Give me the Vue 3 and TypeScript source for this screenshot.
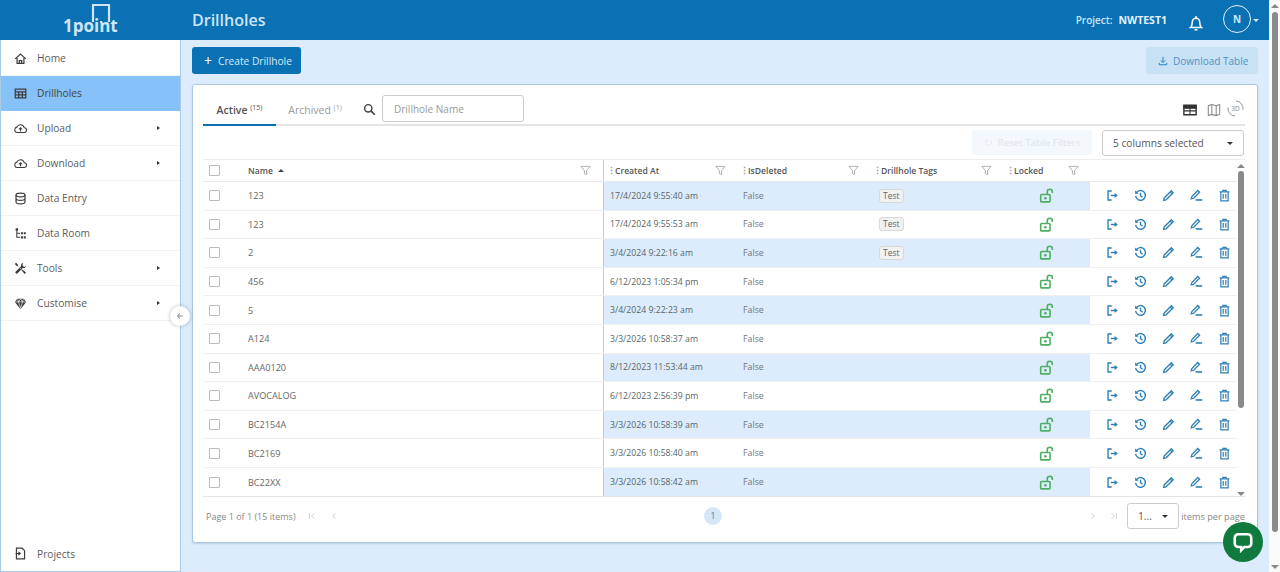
<script setup lang="ts">
interface Row { name: string; created: string; tag?: string }
const nav = [
  { label: 'Home', icon: 'i-home' },
  { label: 'Drillholes', icon: 'i-table', active: true },
  { label: 'Upload', icon: 'i-cloud-up', more: true },
  { label: 'Download', icon: 'i-cloud-up', more: true },
  { label: 'Data Entry', icon: 'i-db' },
  { label: 'Data Room', icon: 'i-tree' },
  { label: 'Tools', icon: 'i-tools', more: true },
  { label: 'Customise', icon: 'i-gem', more: true },
]
const rows: Row[] = [
  { name: '123', created: '17/4/2024 9:55:40 am', tag: 'Test' },
  { name: '123', created: '17/4/2024 9:55:53 am', tag: 'Test' },
  { name: '2', created: '3/4/2024 9:22:16 am', tag: 'Test' },
  { name: '456', created: '6/12/2023 1:05:34 pm' },
  { name: '5', created: '3/4/2024 9:22:23 am' },
  { name: 'A124', created: '3/3/2026 10:58:37 am' },
  { name: 'AAA0120', created: '8/12/2023 11:53:44 am' },
  { name: 'AVOCALOG', created: '6/12/2023 2:56:39 pm' },
  { name: 'BC2154A', created: '3/3/2026 10:58:39 am' },
  { name: 'BC2169', created: '3/3/2026 10:58:40 am' },
  { name: 'BC22XX', created: '3/3/2026 10:58:42 am' },
]
const columns = ['Created At', 'IsDeleted', 'Drillhole Tags', 'Locked']
const actions = ['i-export', 'i-history', 'i-pen', 'i-pen-line', 'i-trash']
</script>

<template>
  <div class="page">
    <svg class="defs" aria-hidden="true">
      <symbol id="i-home" viewBox="0 0 16 16"><path d="M1.500 8.500 8 2.500l6.500 6M3.800 7.500V14h8.400V7.500M6.500 14v-3.500h3V14" fill="none" stroke="currentColor" stroke-width="1.500"/></symbol>
      <symbol id="i-table" viewBox="0 0 16 16"><path d="M1.500 2.500h13v11h-13zM1.500 6h13M1.500 9.700h13M5.800 6v7.500M10.200 6v7.500" fill="none" stroke="currentColor" stroke-width="1.500"/></symbol>
      <symbol id="i-cloud-up" viewBox="0 0 16 16"><path d="M4 13h8.200a3 3 0 0 0 .4-6A4.800 4.800 0 0 0 3.600 6.300 3.400 3.400 0 0 0 4 13z" fill="none" stroke="currentColor" stroke-width="1.300"/><path d="M8 11.500V8.500" stroke="currentColor" stroke-width="1.500"/><path d="M5.300 9 8 6l2.700 3z" fill="currentColor"/></symbol>
      <symbol id="i-db" viewBox="0 0 16 16"><ellipse cx="8" cy="3.800" rx="5.500" ry="2.300" fill="none" stroke="currentColor" stroke-width="1.500"/><path d="M2.500 3.800v8.400c0 1.300 2.500 2.300 5.500 2.300s5.500-1 5.500-2.300V3.800M2.500 8c0 1.300 2.500 2.300 5.500 2.300s5.500-1 5.500-2.300" fill="none" stroke="currentColor" stroke-width="1.500"/></symbol>
      <symbol id="i-tree" viewBox="0 0 16 16"><path d="M2 1.500h3v3H2zM8.500 6.500h2.500V9H8.500zM12 6.500h2.500V9H12zM8.500 11.500h2.500V14H8.500zM12 11.500h2.500V14H12z" fill="currentColor"/><path d="M3.500 4.500V12.700H7.500M3.500 7.800H7.500" fill="none" stroke="currentColor" stroke-width="1.300"/></symbol>
      <symbol id="i-tools" viewBox="0 0 16 16"><path d="M2.500 1 5 3.500 4.500 5 14.800 13 13 14.800 5 4.500 3.500 5 1 2.500zM11.500 1.200a3 3 0 0 0-2.800 4L1.300 12.500 3.500 14.700 10.800 7.300a3 3 0 0 0 4-2.800l-2 1.500-2-1.200L10.500 3z" fill="currentColor"/></symbol>
      <symbol id="i-gem" viewBox="0 0 16 16"><path d="M4 2h8l3 4-7 9-7-9z" fill="currentColor"/><path d="M1.500 6h13M5.500 6 8 14l2.500-8M4.500 2.500 5.500 6 8 2.500 10.500 6l1-3.500" fill="none" stroke="#fff" stroke-width=".8"/></symbol>
      <symbol id="i-file" viewBox="0 0 16 16"><path d="M3 1.500h7l3 3v10H3z" fill="none" stroke="currentColor" stroke-width="1.500"/><path d="M2 8h5.500M5.500 6l2.200 2-2.200 2" fill="none" stroke="currentColor" stroke-width="1.500"/></symbol>
      <symbol id="i-filter" viewBox="0 0 12 12"><path d="M1 1.500h10L7.200 6v4.500L4.800 9.500V6z" fill="none" stroke="currentColor" stroke-width="1"/></symbol>
      <symbol id="i-unlock" viewBox="0 0 16 16"><rect x="1.800" y="7" width="10" height="7.800" rx="1" fill="none" stroke="currentColor" stroke-width="1.700"/><circle cx="6.800" cy="10.900" r="1.400" fill="currentColor"/><path d="M8.800 7V4a2.700 2.700 0 0 1 5.400 0v1.200" fill="none" stroke="currentColor" stroke-width="1.700"/></symbol>
      <symbol id="i-export" viewBox="0 0 16 16"><path d="M7 2.500H2.500v11H7" fill="none" stroke="currentColor" stroke-width="1.700"/><path d="M6 8h7.500" stroke="currentColor" stroke-width="1.800"/><path d="M10.500 4.800 14.500 8l-4 3.200z" fill="currentColor"/></symbol>
      <symbol id="i-history" viewBox="0 0 16 16"><path d="M2.600 5.200A6 6 0 1 1 2 8.500" fill="none" stroke="currentColor" stroke-width="1.700"/><path d="M1.200 1.800 1.600 6l4.200-.5z" fill="currentColor"/><path d="M8 4.500V8.300l2.500 1.700" fill="none" stroke="currentColor" stroke-width="1.700"/></symbol>
      <symbol id="i-pen" viewBox="0 0 16 16"><path d="M11.500 2.200 13.800 4.500 5 13.300 2 14l.7-3z" fill="none" stroke="currentColor" stroke-width="1.600"/><path d="M10 3.700 12.300 6" stroke="currentColor" stroke-width="1.600"/></symbol>
      <symbol id="i-pen-line" viewBox="0 0 16 16"><path d="M9.500 1.800 11.800 4.100 4.500 11.400 1.500 12.200 2.300 9.200z" fill="none" stroke="currentColor" stroke-width="1.600"/><path d="M7 13.500h8" stroke="currentColor" stroke-width="2"/></symbol>
      <symbol id="i-trash" viewBox="0 0 16 16"><path d="M3.500 3.500h9v11h-9zM2 3.500h12M6 3.500V1.700h4v1.800M6.400 6v6M9.600 6v6" fill="none" stroke="currentColor" stroke-width="1.500"/></symbol>
      <symbol id="i-first" viewBox="0 0 8 8"><path d="M1.500 1v6M6.500 1.500 3.500 4l3 2.500" fill="none" stroke="currentColor" stroke-width="1"/></symbol>
      <symbol id="i-prev" viewBox="0 0 8 8"><path d="M5.500 1.500 2.500 4l3 2.500" fill="none" stroke="currentColor" stroke-width="1"/></symbol>
      <symbol id="i-next" viewBox="0 0 8 8"><path d="M2.500 1.500 5.500 4l-3 2.500" fill="none" stroke="currentColor" stroke-width="1"/></symbol>
      <symbol id="i-last" viewBox="0 0 8 8"><path d="M6.500 1v6M1.500 1.500 4.500 4l-3 2.500" fill="none" stroke="currentColor" stroke-width="1"/></symbol>
    </svg>

    <div class="app">
      <header class="topbar">
        <div class="logo">
          <svg class="logo-mark" viewBox="0 0 20 20"><path d="M2 19V2h16v17M9 19h2" fill="none" stroke="currentColor" stroke-width="2.200"/></svg>
          <span class="logo-text">1point</span>
        </div>
        <h1 class="title">Drillholes</h1>
        <div class="top-right">
          <span class="project">Project:</span>
          <strong class="project-name">NWTEST1</strong>
          <svg class="bell" viewBox="0 0 16 16"><path d="M2.500 12.500c1.200-1 1.800-2.500 1.800-5.500a3.700 3.700 0 0 1 7.400 0c0 3 .6 4.500 1.800 5.500zM6.500 14.700h3M8 1v2" fill="none" stroke="currentColor" stroke-width="1.500"/></svg>
          <span class="avatar">N</span>
          <span class="caret-white"></span>
        </div>
      </header>

      <div class="body">
        <aside class="sidebar">
          <nav class="nav">
            <a v-for="item in nav" :key="item.label" class="nav-item" :class="{ active: item.active }">
              <svg class="nav-icon"><use :href="'#' + item.icon" /></svg>
              <span class="nav-label">{{ item.label }}</span>
              <span v-if="item.more" class="arrow"></span>
            </a>
          </nav>
          <a class="nav-item projects">
            <svg class="nav-icon"><use href="#i-file" /></svg>
            <span class="nav-label">Projects</span>
          </a>
          <button class="collapse" aria-label="collapse">
            <svg viewBox="0 0 8 8"><path d="M7 4H1.500M4 1.500 1.300 4 4 6.500" fill="none" stroke="currentColor" stroke-width="1"/></svg>
          </button>
        </aside>

        <main class="content">
          <div class="toolbar">
            <button class="btn primary"><span class="plus">+</span>Create Drillhole</button>
            <button class="btn light">
              <svg class="dl" viewBox="0 0 16 16"><path d="M8 1.500v8.500M4.500 7 8 10.500 11.500 7M2 11v3h12v-3" fill="none" stroke="currentColor" stroke-width="1.600"/></svg>
              Download Table
            </button>
          </div>

          <section class="card">
            <div class="tabs">
              <div class="tab on">Active <sup>(15)</sup></div>
              <div class="tab">Archived <sup>(1)</sup></div>
              <svg class="search" viewBox="0 0 16 16"><circle cx="6.500" cy="6.500" r="4.500" fill="none" stroke="currentColor" stroke-width="1.800"/><path d="m10 10 4.500 4.500" stroke="currentColor" stroke-width="2"/></svg>
              <div class="search-box">Drillhole Name</div>
              <div class="views">
                <svg class="view dark" viewBox="0 0 16 16"><path d="M1 2.500h14v11H1z" fill="none" stroke="currentColor" stroke-width="1.600"/><path d="M1 3h14v3H1zM1 9h14M8 6v7.500" fill="currentColor" stroke="currentColor" stroke-width="1.200"/></svg>
                <svg class="view" viewBox="0 0 16 16"><path d="M1.500 3 5.500 1.800l5 1.400 4-1.400v11.200l-4 1.400-5-1.400-4 1.200zM5.500 1.800V13M10.500 3.200v11.200" fill="none" stroke="currentColor" stroke-width="1.200"/></svg>
                <span class="view-3d">
                  <svg viewBox="0 0 17 17"><path d="M9 1a7.500 7.500 0 0 1 7 8.500M8 16A7.500 7.500 0 0 1 1 7.500" fill="none" stroke="currentColor" stroke-width=".9"/></svg>
                  3D
                </span>
              </div>
            </div>

            <div class="filters">
              <button class="reset">
                <svg class="reset-ic" viewBox="0 0 16 16"><path d="M11.500 3.500A5.500 5.500 0 1 1 4.500 3.500M4 1.500v3h3" fill="none" stroke="currentColor" stroke-width="1.300"/></svg>
                Reset Table Filters
              </button>
              <div class="select wide">5 columns selected<span class="caret"></span></div>
            </div>

            <div class="table">
              <div class="table-main">
                <div class="row head">
                  <div class="cell frozen">
                    <span class="check"></span>
                    <span class="name-head">Name</span>
                    <span class="sort"></span>
                    <svg class="filter"><use href="#i-filter" /></svg>
                  </div>
                  <div v-for="c in columns" :key="c" class="cell hcell">
                    <span class="grip">⋮</span>
                    <span class="hlabel">{{ c }}</span>
                    <svg class="filter"><use href="#i-filter" /></svg>
                  </div>
                  <div class="cell"></div>
                </div>
                <div v-for="(r, i) in rows" :key="i" class="row" :class="{ band: i % 2 === 0 }">
                  <div class="cell frozen">
                    <span class="check"></span>
                    <span class="name">{{ r.name }}</span>
                  </div>
                  <div class="cell data date">{{ r.created }}</div>
                  <div class="cell data">False</div>
                  <div class="cell data"><span v-if="r.tag" class="tag">{{ r.tag }}</span></div>
                  <div class="cell data lock"><svg class="unlock"><use href="#i-unlock" /></svg></div>
                  <div class="cell acts">
                    <svg v-for="a in actions" :key="a" class="act"><use :href="'#' + a" /></svg>
                  </div>
                </div>
              </div>
              <div class="tscroll">
                <span class="up"></span>
                <span class="tthumb"></span>
                <span class="down"></span>
              </div>
            </div>

            <div class="pager">
              <span class="pinfo total">Page 1 of 1 (15 items)</span>
              <svg class="pn first"><use href="#i-first" /></svg>
              <svg class="pn gap"><use href="#i-prev" /></svg>
              <span class="pnum">1</span>
              <svg class="pn next"><use href="#i-next" /></svg>
              <svg class="pn gap2"><use href="#i-last" /></svg>
              <div class="select small">1...<span class="caret"></span></div>
              <span class="pinfo per">items per page</span>
            </div>
          </section>
        </main>
      </div>
    </div>

    <div class="pscroll">
      <span class="up"></span>
      <span class="pthumb"></span>
      <span class="down"></span>
    </div>

    <button class="chat" aria-label="chat">
      <svg viewBox="0 0 24 24"><path d="M7 3.500h10a4 4 0 0 1 4 4v6a4 4 0 0 1-4 4h-3.500l-3.500 3.500v-3.500H7a4 4 0 0 1-4-4v-6a4 4 0 0 1 4-4z" fill="none" stroke="#fff" stroke-width="2.800"/></svg>
    </button>
  </div>
</template>

<style>
html, body { margin: 0; overflow: hidden; }
</style>

<style scoped>
* { box-sizing: border-box; }
.defs { position: absolute; width: 0; height: 0; }
.page { position: relative; display: flex; width: 1280px; height: 572px; overflow: hidden; font-family: "Open Sans", "Noto Sans", sans-serif; color: #555; background: #dcecfc; }
.app { flex: 1; min-width: 0; display: flex; flex-direction: column; }
.topbar { height: 40px; flex: none; background: #0a71b4; display: flex; align-items: center; color: #fff; }
.logo { position: relative; width: 181px; height: 40px; flex: none; color: #cfe5f6; }
.logo-mark { position: absolute; left: 91px; top: 3px; width: 20px; height: 20px; }
.logo-text { position: absolute; left: 63px; top: 15px; font-size: 17px; line-height: 22px; font-weight: 700; }
.title { margin: 0 0 0 11px; font-size: 16px; font-weight: 600; color: #cfe6f8; }
.top-right { margin-left: auto; display: flex; align-items: center; padding-right: 10px; color: #cfe6f8; font-size: 10px; }
.project { font-weight: 600; margin-right: 6px; }
.project-name { font-size: 10.500px; font-weight: 700; color: #e5f2fc; }
.bell { width: 16px; height: 16px; margin: 6px 0 0 20.500px; color: #fff; }
.avatar { width: 28px; height: 28px; margin: 0 0 2px 19.500px; border: 1.300px solid #e5f2fc; border-radius: 50%; display: flex; align-items: center; justify-content: center; font-size: 10px; font-weight: 700; }
.caret-white { margin-left: 2px; border: 3px solid transparent; border-top-color: #d8ebf9; border-bottom: 0; }

.body { flex: 1; min-height: 0; display: flex; }
.sidebar { position: relative; width: 181px; flex: none; display: flex; flex-direction: column; background: #fff; border: 1px solid #a9cbe6; border-top: 0; }
.nav { display: flex; flex-direction: column; flex: 1; padding-top: 1px; }
.nav-item { height: 35px; flex: none; display: flex; align-items: center; padding-left: 13px; border-bottom: 1px solid #eef3f8; font-size: 10.200px; color: #5c5c5c; }
.nav-item.active { background: #86c1f8; border-bottom-color: #86c1f8; color: #444; }
.nav-item.projects { border-bottom: 0; }
.nav-icon { width: 13px; height: 13px; flex: none; color: #3c3c3c; }
.nav-label { margin-left: 10px; flex: 1; }
.arrow { margin-right: 20px; border: 2.500px solid transparent; border-left: 3px solid #333; border-right: 0; }
.collapse { position: absolute; right: -10px; top: 266px; width: 20px; height: 20px; padding: 0; border: 0; border-radius: 50%; background: #fff; box-shadow: 0 0 4px rgba(0, 0, 0, .25); color: #888; display: flex; align-items: center; justify-content: center; }
.collapse svg { width: 8px; height: 8px; }

.content { flex: 1; min-width: 0; padding: 7px 11px 29px; display: flex; flex-direction: column; }
.toolbar { display: flex; justify-content: space-between; height: 27px; flex: none; margin-bottom: 10px; }
.btn { height: 27px; border: 0; border-radius: 3px; font: inherit; font-size: 10.200px; display: flex; align-items: center; }
.primary { width: 109px; background: #0a71b4; color: #d7ebf9; padding-left: 12px; }
.plus { font-size: 14px; line-height: 1; margin-right: 6px; color: #fff; }
.light { width: 112px; background: #c8e1f5; color: #4d93c5; padding-left: 12px; font-size: 10px; }
.dl { width: 10px; height: 10px; margin-right: 5px; color: #2b82bd; }

.card { flex: 1; min-height: 0; background: #fff; border: 1px solid #a9c8e0; border-radius: 3px; padding: 10px 12px 0 10px; display: flex; flex-direction: column; box-shadow: 0 1px 2px rgba(60, 100, 140, .2); }
.tabs { height: 31px; flex: none; display: flex; align-items: center; border-bottom: 2px solid #e4e4e4; position: relative; }
.tab { width: 73px; height: 31px; margin-bottom: -2px; padding-top: 8px; text-align: center; font-size: 10.500px; color: #999; border-bottom: 2px solid transparent; }
.tab + .tab { width: 70px; margin-left: 4px; }
.tab.on { color: #555; font-weight: 600; border-bottom-color: #0a71b4; }
sup { font-size: 7px; line-height: 0; font-weight: 400; }
.search { width: 13px; height: 13px; margin: 0 6px 0 13px; color: #444; flex: none; }
.search-box { width: 142px; height: 27px; margin-bottom: 2px; border: 1px solid #ccc; border-radius: 3px; padding-left: 11px; font-size: 10px; line-height: 27px; color: #999; }
.views { margin-left: auto; display: flex; align-items: center; padding-right: 1px; }
.view { width: 14px; height: 14px; color: #888; margin-right: 10px; }
.view + .view { margin-right: 6px; }
.view.dark { color: #333; }
.view-3d { position: relative; width: 17px; height: 17px; font-size: 6.500px; line-height: 17px; text-align: center; color: #888; margin-bottom: 2px; }
.view-3d svg { position: absolute; left: 0; top: 0; width: 17px; height: 17px; }

.filters { height: 33px; flex: none; display: flex; justify-content: flex-end; align-items: flex-start; gap: 10px; padding: 4px 1px 0 0; }
.reset { width: 120px; height: 25px; border: 0; border-radius: 3px; background: #f3f8fd; color: #dce3ea; font: inherit; font-size: 9.800px; display: flex; align-items: center; justify-content: center; gap: 5px; }
.reset-ic { width: 9px; height: 9px; color: #dde5ec; }
.select { position: relative; border: 1px solid #ccc; border-radius: 3px; background: #fff; font-size: 10.200px; color: #555; display: flex; align-items: center; }
.wide { width: 142px; height: 26px; padding-left: 10px; }
.small { width: 53px; height: 26px; padding-left: 10px; margin-left: 9px; }
.caret { position: absolute; right: 10px; top: 11px; border: 3.500px solid transparent; border-top-color: #333; border-bottom: 0; }

.table { flex: none; display: flex; border-top: 1px solid #ececec; border-bottom: 1px solid #e4e4e4; height: 338px; overflow: hidden; }
.table-main { width: 1034px; flex: none; }
.row { display: grid; grid-template-columns: 401px 133px 133px 133px 87px 147px; height: 28.600px; border-bottom: 1px solid #f0f0f0; font-size: 8.800px; }
.row.head { height: 22px; border-bottom: 1px solid #e8e8e8; font-weight: 600; color: #555; font-size: 8.600px; }
.row:last-child { border-bottom: 0; }
.cell { display: flex; align-items: center; min-width: 0; }
.frozen { position: relative; padding-left: 6px; border-right: 1px solid #c8c8c8; }
.check { width: 11px; height: 11px; border: 1px solid #bbb; border-radius: 1px; flex: none; background: #fff; }
.name-head { margin-left: 28px; }
.name { margin-left: 28px; color: #666; font-size: 9.100px; }
.sort { margin-left: 5px; border: 3px solid transparent; border-bottom-color: #444; border-top: 0; }
.filter { width: 11px; height: 11px; color: #aaa; margin-left: auto; flex: none; }
.frozen .filter { margin-right: 12px; }
.hcell { padding-left: 3px; padding-right: 11px; }
.grip { font-size: 9px; color: #999; width: 8px; flex: none; }
.data { padding-left: 6px; color: #777; }
.band .data { background: #dcecfc; }
.date { color: #566; font-size: 8.700px; }
.tag { margin-left: 3px; padding: 0 3px; height: 14px; line-height: 12px; border: 1px solid #d8d8d8; border-radius: 3px; background: #f1f1f1; font-size: 8.500px; color: #666; }
.lock { justify-content: center; padding: 0; }
.unlock { width: 15px; height: 15px; color: #4caf62; }
.acts { justify-content: space-between; padding: 0 6px 0 16px; }
.act { width: 13px; height: 13px; color: #2f80b5; }

.tscroll { flex: 1; display: flex; flex-direction: column; align-items: center; }
.up { border: 4px solid transparent; border-bottom-color: #888; border-top: 0; flex: none; }
.down { border: 4px solid transparent; border-top-color: #888; border-bottom: 0; flex: none; }
.tscroll .up { margin-top: 4px; }
.tthumb { width: 6px; height: 237px; margin-top: 3px; background: #8a8a8a; border-radius: 3px; flex: none; }
.tscroll .down { margin-top: auto; }

.pager { flex: 1; display: flex; align-items: center; padding: 0 0 8px 3px; font-size: 9.200px; }
.pinfo { color: #888; margin-top: 2px; }
.total { width: 89px; flex: none; white-space: nowrap; font-size: 9px; }
.per { margin-left: 2px; white-space: nowrap; }
.pn { width: 8px; height: 8px; flex: none; color: #d5d5d5; }
.first { margin-left: 13px; }
.gap { margin-left: 14px; }
.pnum { width: 18px; height: 18px; margin-left: 366px; border-radius: 50%; background: #d5e8f8; color: #4a7a9c; font-size: 8.500px; display: flex; align-items: center; justify-content: center; flex: none; }
.next { margin-left: 367px; }
.gap2 { margin-left: 13px; }

.pscroll { width: 11px; flex: none; background: #fafafa; display: flex; flex-direction: column; align-items: center; padding: 4px 0 3px; }
.pthumb { width: 6px; height: 520px; margin-top: 4px; background: #8a8a8a; border-radius: 3px; flex: none; }
.pscroll .down { margin-top: auto; }

.chat { position: absolute; left: 1223px; top: 522px; width: 40px; height: 40px; padding: 0; border: 0; border-radius: 50%; background: #0f7a3c; display: flex; align-items: center; justify-content: center; }
.chat svg { width: 22px; height: 22px; }
</style>
